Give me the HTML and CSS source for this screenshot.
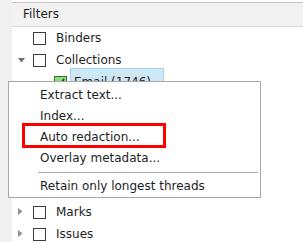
FILE: index.html
```html
<!DOCTYPE html>
<html lang="en">
<head>
    <meta charset="UTF-8">
    <title>Filters</title>
    <link rel="stylesheet" href="styles.css">
</head>
<body>
    <div class="app">
        <div class="gutter"></div>
        <div class="panel">
            <div class="panel-head">Filters</div>
            <div class="tree">
                <div class="row">
                    <span class="toggle"></span>
                    <span class="check"></span>
                    <span class="label">Binders</span>
                </div>
                <div class="row">
                    <span class="toggle">
                        <svg width="8" height="5" viewBox="0 0 8 5"><path d="M0 0H7L3.5 4.5Z" fill="#707070"/></svg>
                    </span>
                    <span class="check"></span>
                    <span class="label">Collections</span>
                </div>
                <div class="row child">
                    <span class="check checked">
                        <svg width="11" height="11" viewBox="0 0 11 11"><path d="M2 6L4.5 8.5L9 2" fill="none" stroke="#1d3d12" stroke-width="1.6"/></svg>
                    </span>
                    <span class="label selected">Email (1746)</span>
                </div>
                <div class="tree-hidden"></div>
                <div class="row">
                    <span class="toggle">
                        <svg width="5" height="8" viewBox="0 0 5 8"><path d="M0 0V7L4.5 3.5Z" fill="#909090"/></svg>
                    </span>
                    <span class="check"></span>
                    <span class="label">Marks</span>
                </div>
                <div class="row">
                    <span class="toggle">
                        <svg width="5" height="8" viewBox="0 0 5 8"><path d="M0 0V7L4.5 3.5Z" fill="#909090"/></svg>
                    </span>
                    <span class="check"></span>
                    <span class="label">Issues</span>
                </div>
            </div>
        </div>
    </div>

    <!-- context menu opened on the Email collection -->
    <div class="menu">
        <div class="menu-item">Extract text...</div>
        <div class="menu-item">Index...</div>
        <div class="menu-item">Auto redaction...</div>
        <div class="menu-item">Overlay metadata...</div>
        <div class="menu-sep"></div>
        <div class="menu-item">Retain only longest threads</div>
        <div class="highlight"></div>
    </div>
</body>
</html>
```

FILE: styles.css
```css
body {
    margin: 0;
    background: #ffffff;
    font-family: "DejaVu Sans", Verdana, sans-serif;
    font-size: 12px;
    color: #1e1e1e;
    overflow: hidden;
}
.app {
    display: flex;
    height: 242px;
}
.gutter {
    width: 12px;
    background: #f0f0f0;
}
.panel {
    flex: 1;
    padding-top: 2px;
}
.panel-head {
    height: 23px;
    line-height: 23px;
    padding-left: 11px;
    background: #f2f2f2;
    border-top: 1px solid #c8c8c8;
    border-bottom: 1px solid #d8d8d8;
}
.row {
    display: flex;
    align-items: center;
    height: 22px;
    padding-left: 6px;
}
.row.child {
    padding-left: 42px;
}
.toggle {
    width: 15px;
    display: flex;
    align-items: center;
}
.check {
    width: 11px;
    height: 11px;
    border: 1px solid #3c3c3c;
    background: #fff;
    margin-right: 10px;
    flex-shrink: 0;
}
.check.checked {
    background: #8fdc7a;
    border-color: #3a6e2e;
    margin-right: 3px;
}
.check svg {
    display: block;
}
.label.selected {
    background: #cde8f4;
    border: 1px solid #9fd3ee;
    padding: 6px 12px 6px 3px;
}
.tree-hidden {
    height: 108px;
}
.menu {
    position: absolute;
    left: 8px;
    top: 81px;
    width: 251px;
    padding: 3px 0 0;
    background: #ffffff;
    border: 1px solid #a8a8a8;
}
.menu-item {
    height: 21px;
    line-height: 21px;
    padding-left: 31px;
}
.menu-sep {
    height: 1px;
    background: #a8a8a8;
    margin: 3px 2px 3px 29px;
}
.highlight {
    position: absolute;
    left: 13px;
    top: 41px;
    width: 138px;
    height: 19px;
    border: 3px solid #ff0000;
}
```
